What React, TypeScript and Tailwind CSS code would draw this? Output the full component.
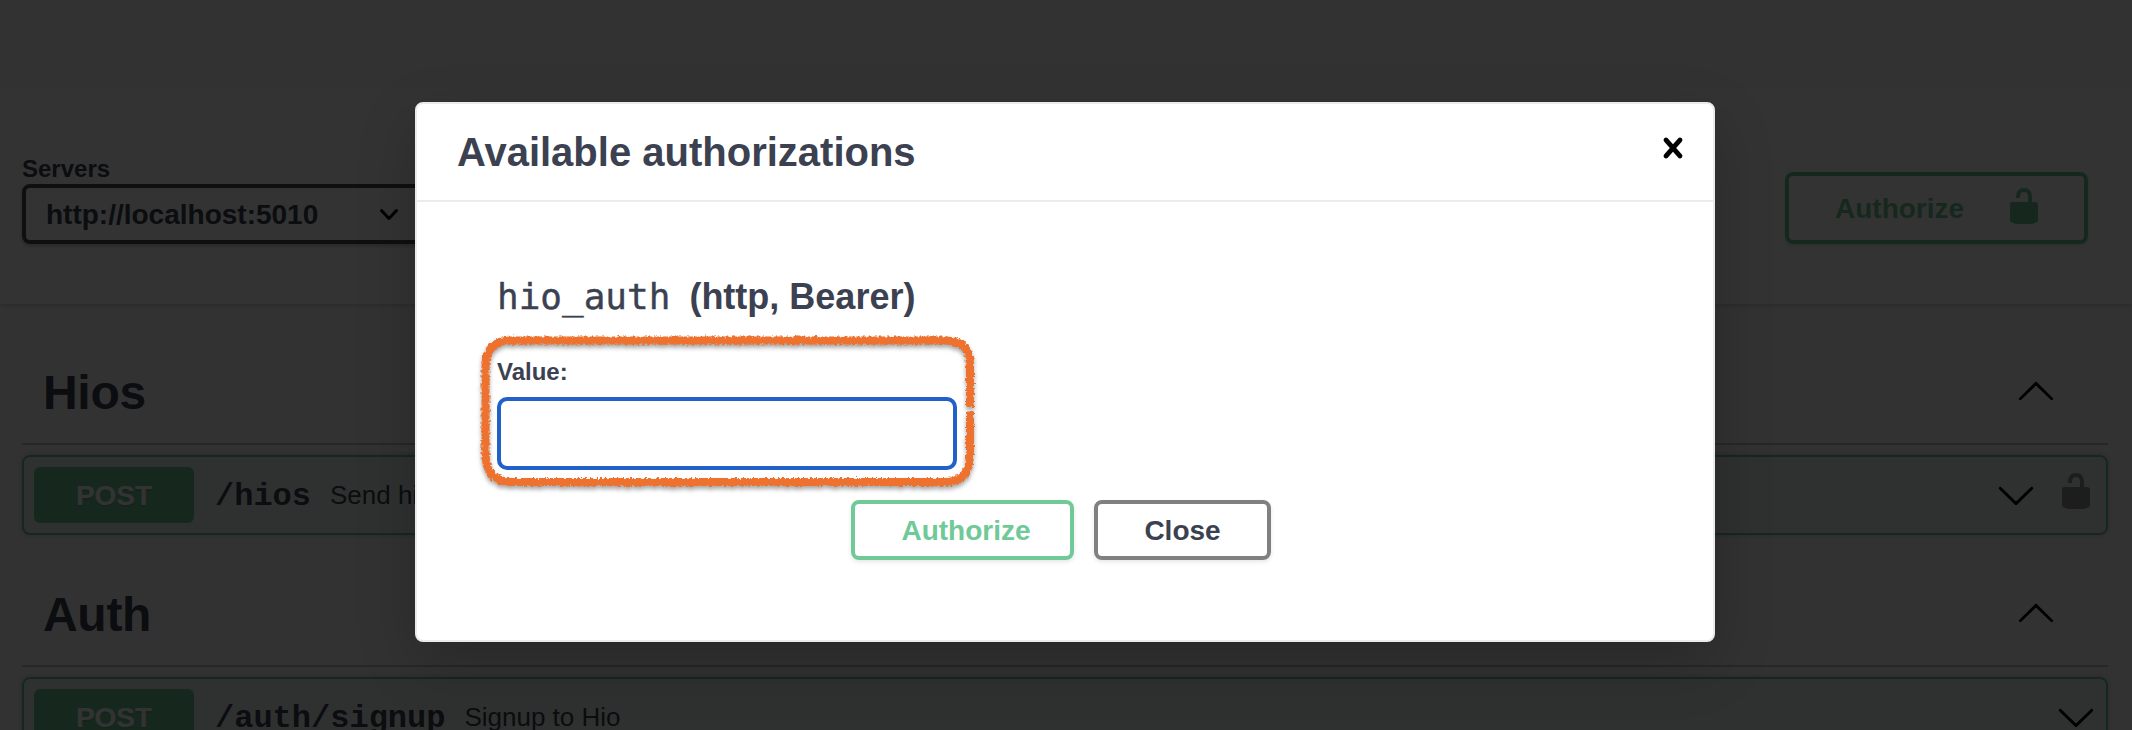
import React from "react";

const UP =
  "M17.418 14.908c.272.268.709.268.979 0s.271-.701 0-.969l-7.908-7.83c-.27-.268-.707-.268-.979 0l-7.908 7.83c-.27.268-.27.701 0 .969.271.268.709.268.979 0L10 7.767l7.418 7.141z";
const DOWN =
  "M17.418 6.109c.272-.268.709-.268.979 0s.271.701 0 .969l-7.908 7.83c-.27.268-.707.268-.979 0l-7.908-7.83c-.27-.268-.27-.701 0-.969.271-.268.709-.268.979 0L10 13.25l7.418-7.141z";
const UNLOCKED =
  "M15.8 8H14V5.6C14 2.703 12.665 1 10 1 7.334 1 6 2.703 6 5.6V6h2v-.801C8 3.754 8.797 3 10 3c1.203 0 2 .754 2 2.199V8H4c-.553 0-1 .646-1 1.199V17c0 .549.428 1.139.951 1.307l1.197.387C5.672 18.861 6.55 19 7.1 19h5.8c.549 0 1.428-.139 1.951-.307l1.196-.387c.524-.167.953-.757.953-1.306V9.199C17 8.646 16.352 8 15.8 8z";
const CLOSE =
  "M14.348 14.849c-.469.469-1.229.469-1.697 0L10 11.819l-2.651 3.029c-.469.469-1.229.469-1.697 0-.469-.469-.469-1.229 0-1.697l2.758-3.15-2.759-3.152c-.469-.469-.469-1.228 0-1.697.469-.469 1.228-.469 1.697 0L10 8.183l2.651-3.031c.469-.469 1.228-.469 1.697 0 .469.469.469 1.229 0 1.697l-2.758 3.152 2.758 3.15c.469.469.469 1.229 0 1.698z";

function Icon({ d, className = "" }: { d: string; className?: string }) {
  return (
    <svg viewBox="0 0 20 20" className={`size-10 shrink-0 ${className}`} fill="currentColor">
      <path d={d} />
    </svg>
  );
}

function Section({
  title,
  path,
  summary,
  locked,
}: {
  title: string;
  path: string;
  summary: string;
  locked?: boolean;
}) {
  return (
    <section className="h-[222px]">
      <div className="flex h-[122px] items-center justify-between border-b-2 border-[rgba(59,65,81,0.3)] pl-[21px] pr-[52px] pt-[13px]">
        <h2 className="pt-[6px] text-[48px] font-bold leading-none tracking-[-0.3px]">{title}</h2>
        <Icon d={UP} className="text-black" />
      </div>
      <div className="mt-2.5 flex h-20 items-center rounded-lg border-2 border-[#70c997] bg-[#70c997]/10 px-2.5 shadow-[0_0_6px_rgba(0,0,0,0.19)]">
        <span className="flex h-14 w-40 items-center justify-center rounded-md bg-[#70c997] pt-px text-[28px] font-bold text-white [text-shadow:0_2px_0_rgba(0,0,0,0.1)]">
          POST
        </span>
        <span className="ml-[21px] pt-1 font-['Liberation_Mono',monospace] text-[32px] font-bold leading-none">{path}</span>
        <span className="ml-[19px] text-[26px] leading-none">{summary}</span>
        <span className="ml-auto flex items-center gap-5">
          <Icon d={DOWN} className="text-black" />
          {locked && <Icon d={UNLOCKED} className="relative -top-1 text-black opacity-40" />}
        </span>
      </div>
    </section>
  );
}

function Marker() {
  return (
    <svg
      className="pointer-events-none absolute -left-[22px] -top-[26px] h-[172px] w-[512px]"
      viewBox="0 0 512 172"
      fill="none"
    >
      <defs>
        <filter
          id="rough"
          x="0"
          y="0"
          width="512"
          height="172"
          filterUnits="userSpaceOnUse"
          colorInterpolationFilters="sRGB"
        >
          <feTurbulence type="fractalNoise" baseFrequency="0.4" numOctaves="2" seed="7" result="n" />
          <feDisplacementMap
            in="SourceGraphic"
            in2="n"
            scale="5"
            xChannelSelector="R"
            yChannelSelector="G"
            result="d"
          />
          <feGaussianBlur in="d" stdDeviation="0.4" result="soft" />
          <feDropShadow in="soft" dx="0" dy="3" stdDeviation="2" floodColor="#000" floodOpacity="0.35" />
        </filter>
      </defs>
      <path
        filter="url(#rough)"
        d="M495 84V42Q495 17.500 471 17.500H36Q10.500 17.500 10.500 44V130Q10.500 159 37 159H470Q495 159 495 132V88.500"
        stroke="#ee722d"
        strokeWidth="8"
      />
    </svg>
  );
}

export default function App() {
  return (
    <div className="relative h-[730px] w-[2132px] overflow-hidden bg-[#fafafa] font-['Liberation_Sans',Arial,sans-serif] text-[#3b4151]">
      <div className="pt-[87px]">
        <div className="flex h-[217px] justify-between bg-white pl-[22px] pr-11 shadow-[0_2px_4px_rgba(0,0,0,0.15)]">
          <div className="pt-[68px]">
            <div className="h-[29px] text-[24px] font-bold leading-[28px]">Servers</div>
            <div className="flex h-[60px] w-[460px] items-center rounded-lg border-4 border-[#4b4e55] pl-5 text-[28px] font-bold shadow-[0_2px_4px_rgba(0,0,0,0.25)]">
              <span className="pt-0.5">http://localhost:5010</span>
              <svg
                className="ml-[59px] h-4 w-6"
                viewBox="0 0 24 16"
                fill="none"
                stroke="#000"
                strokeWidth="3"
                strokeLinecap="round"
                strokeLinejoin="round"
              >
                <path d="M4.500 4.500l7.500 8 7.500-8" />
              </svg>
            </div>
          </div>
          <div className="mt-[85px] flex h-[72px] w-[303px] items-center rounded-lg border-4 border-[#70c997] pl-[46px] text-[28px] font-bold text-[#70c997] shadow-[0_2px_4px_rgba(0,0,0,0.1)]">
            <span className="pt-0.5">Authorize</span>
            <Icon d={UNLOCKED} className="relative -top-0.5 ml-10" />
          </div>
        </div>
      </div>
      <div className="px-[22px] pr-6 pt-[19px]">
        <Section title="Hios" path="/hios" summary="Send hio" locked />
        <Section title="Auth" path="/auth/signup" summary="Signup to Hio" />
      </div>

      <div className="absolute inset-0 bg-black/80" />
      <div
        role="dialog"
        className="absolute left-[415px] top-[102px] flex h-[540px] w-[1300px] flex-col rounded-lg border-2 border-[#ebebeb] bg-white shadow-[0_20px_60px_rgba(0,0,0,0.2)]"
      >
        <header className="flex h-[98px] shrink-0 items-center justify-between border-b-2 border-[#ebebeb] pl-10 pr-5">
          <h3 className="text-[40px] font-bold leading-none">Available authorizations</h3>
          <Icon d={CLOSE} className="relative -top-1 text-black" />
        </header>
        <div className="px-20 pt-[75px]">
          <h4 className="flex h-10 items-baseline text-[36px] font-bold leading-10">
            <code className="font-['DejaVu_Sans_Mono',monospace] font-normal leading-10 [-webkit-text-stroke:0.4px_#3b4151]">
              hio_auth
            </code>
            <span className="ml-[19px]">(http, Bearer)</span>
          </h4>
          <div className="relative mt-8 w-[460px]">
            <label className="block h-[48px] text-[24px] font-bold leading-[46px]">Value:</label>
            <input
              aria-label="Value"
              className="block h-[73px] w-full rounded-[10px] border-4 border-[#2161c9] bg-white outline-none"
            />
            <Marker />
          </div>
          <div className="mt-[30px] flex gap-5 pl-[354px] text-[28px] font-bold leading-none">
            <button className="h-[60px] w-[223px] rounded-lg border-4 border-[#70c997] pl-[7px] pt-px text-[#70c997] shadow-[0_2px_4px_rgba(0,0,0,0.1)]">
              Authorize
            </button>
            <button className="h-[60px] w-[177px] rounded-lg border-4 border-[#808080] pt-px shadow-[0_2px_4px_rgba(0,0,0,0.1)]">
              Close
            </button>
          </div>
        </div>
      </div>
    </div>
  );
}
